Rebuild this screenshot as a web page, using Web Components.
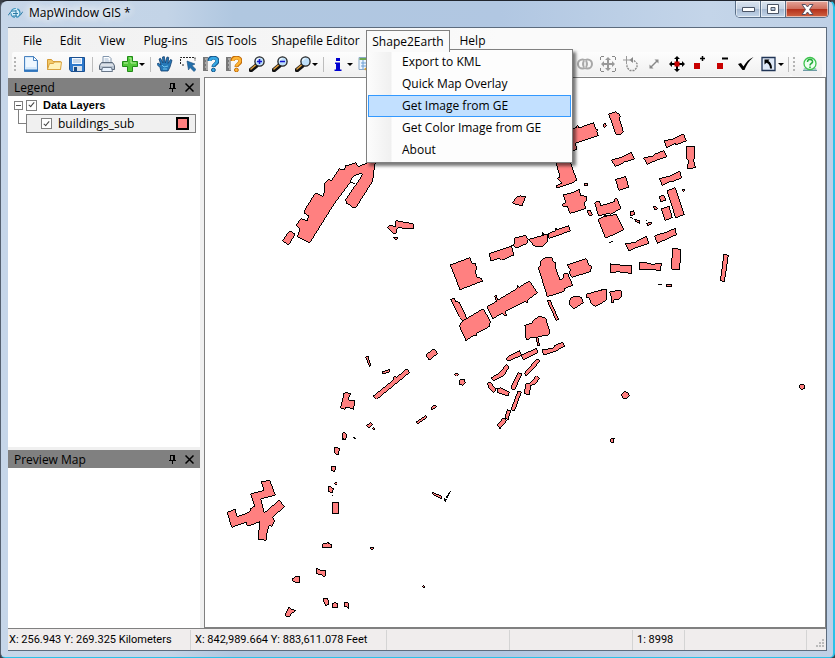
<!DOCTYPE html>
<html lang="en">
<head>
<meta charset="utf-8">
<title>MapWindow GIS</title>
<style>
html,body{height:100%;margin:0}
body{background:#3a3f48;font:12px/16px "Open Sans","Noto Sans",sans-serif;color:#000;overflow:hidden}
</style>
</head>
<body>
<mw-app></mw-app>
<script>
const define = (name, html, setup) => {
  const template = document.createElement('template');
  template.innerHTML = html;
  customElements.define(name, class extends HTMLElement {
    constructor() {
      super();
      this.attachShadow({ mode: 'open' }).append(template.content.cloneNode(true));
    }
    connectedCallback() { if (setup) setup(this, this.shadowRoot); }
  });
};

const lens = (mark) => `<path d="M2 14L7.500 9.500" stroke="#111" stroke-width="4.500" stroke-linecap="round"/><path d="M2 13L6.500 9.200" stroke="#d99a3c" stroke-width="1.600" stroke-linecap="round"/><circle cx="10.500" cy="5.500" r="4.600" fill="#bfe0fa" stroke="#222" stroke-width="1.300"/><path d="M7.500 5a3 3 0 0 1 3-2.500" stroke="#fff" fill="none"/>${mark}`;
const query = (c, d) => `<path d="M0 1h5v14H0z" fill="#777"/><path d="M2 3h3M3 5h2M2 7h3M3 9h2M2 11h3M3 13h2" stroke="#ddd"/><path d="M6.500 5C6.500 2 8.500 1.500 10.500 1.500S14.500 3 14.500 5c0 3-4 3-4 6" fill="none" stroke="${d}" stroke-width="4"/><path d="M6.800 5C7 2.500 8.500 2 10.500 2s3.600 1 3.600 3c0 3-3.800 3-3.800 5.500" fill="none" stroke="${c}" stroke-width="2.400"/><circle cx="10.400" cy="14" r="1.900" fill="${c}" stroke="${d}"/>`;
const ICONS = {
  new: '<path d="M1.500.5h9l4 4v11h-13z" fill="#d5e9fb" stroke="#4a83c0"/><path d="M3 2h7v3h3v6H3z" fill="#eef7ff"/><path d="M10.500.5v4h4z" fill="#fff" stroke="#4a83c0"/><path d="M1 14.500h14" stroke="#2f75bd" stroke-width="2"/>',
  open: '<path d="M1.500 13.500v-10h4l1.500 2h7.500v8z" fill="#f3c968" stroke="#d49a35"/><path d="M1.500 13.500l2-6h4l1-1.500h7l-1 7.500z" fill="#fff2b9" stroke="#d9a441"/>',
  save: '<path d="M.5 1.500h15v14H2l-1.500-2z" fill="#2d79cc" stroke="#1b4f8f"/><path d="M3 2h10v6H3z" fill="#f3f9ff"/><path d="M4 4h8M4 6h8" stroke="#9db9d6"/><path d="M4 10h9v5H4z" fill="#d7e1eb"/><path d="M5 11h3v4H5z" fill="#174a83"/>',
  print: '<path d="M4 7V.5h6l2 2V7" fill="#fff" stroke="#8296ad"/><path d="M5.500 3h4M5.500 5h5" stroke="#9fb6d0"/><path d="M2.500 6.500h11l2 3v4H.5v-4z" fill="#b9c4d1" stroke="#5b6878"/><path d="M2 9h12" stroke="#fff"/><path d="M3.500 11.500h9l1 4h-11z" fill="#e9f3ff" stroke="#697788"/>',
  add: '<path d="M5.500.5h5v5h5v5h-5v5h-5v-5h-5v-5h5z" fill="#53c83a" stroke="#208b17"/><path d="M7 2h2v5h5M2 7h4" stroke="#b6f19f" fill="none"/>',
  hand: '<path d="M4 15L3 11.500 0 8.500 1 7l3 2L2 3l1.500-.7L6 7 5.500 1 7.300.6 8.300 7 10 1l1.700.4L11 7.500 13.500 3.500l1.500.8L13 11l-2 4z" fill="#2679b8" stroke="#123f70" stroke-width=".8"/><path d="M5 9l2 2 4-1M6 13h4" stroke="#71c7ef" fill="none"/>',
  select: '<path d="M.5 8V1.500H15V5M2 9h2" fill="none" stroke="#222" stroke-dasharray="2 1"/><path d="M7 5l8 3-3 1.500 4 4-2 2-4-4L8.500 14z" fill="#226fab" stroke="#164b7c" stroke-width=".6"/>',
  ask: query('#36a8e5', '#155487'),
  ask2: query('#ffb535', '#c16b08'),
  zoomin: lens('<path d="M8 5.500h5M10.500 3v5" stroke="#1414d0" stroke-width="1.500"/>'),
  zoomout: lens('<path d="M8 5.500h5" stroke="#1414d0" stroke-width="1.500"/>'),
  zoom: lens(''),
  info: '<path d="M6 2h4v3H6zM5 6.500h5v7h1.500V15h-7v-1.500H6V8H5z" fill="#0000d0"/>',
  table: '<path d="M1 1.500h12v12H1z" fill="#eef6ff" stroke="#8ba9c8"/><path d="M1.500 2h12v2h-12z" fill="#6da84f"/><path d="M3 7h9M3 10h9M5 4v9" stroke="#6c9fd4"/><path d="M6 13l4-3 3 3-3 3z" fill="#dda02a"/>',
  union: '<g fill="none" stroke="#a8a8a8" stroke-width="2"><ellipse cx="5.500" cy="8" rx="4.500" ry="4.500"/><ellipse cx="10.500" cy="8" rx="4.500" ry="4.500"/></g><path d="M8 4v8" stroke="#ddd"/>',
  extent: '<path d="M.5 4V.5H4M12 .5h3.500V4M15.500 12v3.500H12M4 15.500H.5V12" stroke="#888" fill="none" stroke-dasharray="3 1"/><path d="M8 1l3 3H9v3h3V5l3 3-3 3V9H9v3h2l-3 3-3-3h2V9H4v2L1 8l3-3v2h3V4H5z" fill="#999"/>',
  rotate: '<path d="M3.500 0v8M0 4h7" stroke="#999"/><path d="M8 4.500h3l3 3v4l-3 3H7l-3-3V8" fill="none" stroke="#888" stroke-width="1.300" stroke-dasharray="2 1"/><path d="M10 1v6L6.500 4z" fill="#888"/>',
  resize: '<path d="M5 11l6-6" stroke="#888" stroke-width="1.500"/><path d="M12.500 3.500v4l-4-4zM3.500 12.500v-4l4 4z" fill="#888"/>',
  move: '<path d="M8 0l3 3H9v4h4V5l3 3-3 3V9H9v4h2l-3 3-3-3h2V9H3v2L0 8l3-3v2h4V3H5z" fill="#000"/><path d="M5.500 5.500h5v5h-5z" fill="#c80000"/>',
  plusnode: '<path d="M2 7h6v6H2z" fill="#c80000"/><path d="M8 2.500h5M10.500 0v5" stroke="#000" stroke-width="1.500"/>',
  minusnode: '<path d="M2 7h6v6H2z" fill="#c80000"/><path d="M7 2.500h6" stroke="#000" stroke-width="2"/>',
  check: '<path d="M0 8l3-1 2.500 3.500C8 6 11 3 15.500 1 11 5 8 9.500 6.500 14H4.500z" fill="#000"/>',
  arrowbox: '<path d="M1 1.500h13v13H1z" fill="#dfe9f7" stroke="#213556" stroke-width="1.300"/><path d="M3.500 3.500h5L7.300 5C9.500 6 11 8.500 11 12.500H9C9 9.500 7.500 7.500 5.500 6.800L3.500 8.500z" fill="#000"/>',
  help: '<path d="M2 12h12l1 3H1z" fill="#abc7ce"/><path d="M1 14.500h14" stroke="#6e9ba4"/><circle cx="8" cy="7.500" r="6" fill="#edfff0" stroke="#3dc44d" stroke-width="1.300"/><path d="M5.500 6c0-4 5.500-3 5 0-.3 1.500-2.500 1.500-2.500 3.500M8 10.500V12" stroke="#26ad3c" stroke-width="1.600" fill="none"/>'
};

define('mw-tool', `
<style>
:host{display:block;flex:none;width:23px}
:host([menu]){width:28px}
button{display:flex;align-items:center;gap:1px;width:100%;height:23px;padding:0 2px 0 3px;border:0;background:none}
svg{flex:none;width:16px;height:16px}
i{display:none;border:3px solid transparent;border-top-color:#000;border-bottom:0}
:host([menu]) i{display:block}
</style>
<button type="button"><svg viewBox="0 0 16 16" fill="none"></svg><i></i></button>`,
(host, root) => {
  root.querySelector('svg').innerHTML = ICONS[host.getAttribute('icon')];
  root.querySelector('button').setAttribute('aria-label', host.getAttribute('icon'));
});

define('mw-toolstrip', `
<style>
:host{display:flex;align-items:center;flex:none;height:24px;padding-left:2px;background:linear-gradient(#fdfdfd,#f0f0f0);border-radius:2px}
.grip{flex:none;width:2px;height:14px;margin-right:4px;background:repeating-linear-gradient(#b4b4b4 0 2px,transparent 2px 4px)}
:host([plain]) .grip{display:none}
::slotted(hr){width:1px;height:15px;margin:0 3px;border:0;background:#bdbdbd}
:host([plain]) ::slotted(hr){margin:0 2px}
</style>
<span class="grip"></span><slot></slot>`);

define('mw-menubar', `
<style>
:host{display:block;padding-left:6px;height:24px;background:linear-gradient(90deg,#f0f0f0,#fafafa 60%)}
nav{display:grid;grid-template-columns:37px 39px 44px 63px 68px 101px 84px 45px;height:100%}
nav>button{border:0;background:none;padding:2px 0 0;font:inherit;text-align:center;white-space:nowrap}
.open{position:relative;z-index:3}
.open>button{display:block;width:100%;height:22px;margin-top:2px;padding:0;border:1px solid #808080;border-bottom:0;background:#fafafa;font:inherit;white-space:nowrap;position:relative;z-index:2}
</style>
<nav>
<button>File</button><button>Edit</button><button>View</button><button>Plug-ins</button><button>GIS Tools</button><button>Shapefile Editor</button>
<div class="open"><button aria-expanded="true">Shape2Earth</button><slot></slot></div>
<button>Help</button>
</nav>`);

define('mw-dropdown', `
<style>
:host{position:absolute;left:0;top:21px;z-index:1;box-sizing:border-box;width:207px;padding:1px;border:1px solid #808080;background:linear-gradient(90deg,transparent 1px,#fcfcfc 1px,#f0f0f0 24px,#fdfdfd 25px);background-color:#fdfdfd;box-shadow:3px 3px 3px #0008}
</style>
<div role="menu"><slot></slot></div>`);

define('mw-menuitem', `
<style>
:host{display:block}
button{display:block;box-sizing:border-box;width:100%;height:22px;padding:0 0 0 33px;border:1px solid transparent;background:none;font:inherit;text-align:left;white-space:nowrap}
:host([active]) button{border-color:#3399ff;background:#c2e0ff}
</style>
<button role="menuitem"><slot></slot></button>`);

define('mw-panel', `
<style>
:host{display:flex;flex-direction:column;min-height:0;background:#fff}
header{display:flex;align-items:center;flex:none;height:18px;padding:0 2px 0 6px;background:#808080}
h2{flex:1;margin:0;padding-top:1px;font:inherit}
button{display:block;width:17px;height:16px;padding:0;border:0;background:none}
svg{display:block;margin:auto}
</style>
<header><h2></h2>
<button aria-label="Pin"><svg width="9" height="9" viewBox="0 0 9 9" shape-rendering="crispEdges"><path d="M2 0h5v5h1v1H5v3H4V6H1V5h1zM3 1v4h2V1z" fill="#000" fill-rule="evenodd"/></svg></button>
<button aria-label="Close"><svg width="9" height="9" viewBox="0 0 9 9"><path d="M.5.5l8 8M8.500.5l-8 8" stroke="#000" stroke-width="1.500"/></svg></button>
</header><slot></slot>`,
(host, root) => { root.querySelector('h2').textContent = host.getAttribute('heading'); });

define('mw-layers', `
<style>
:host{display:block;padding-right:4px}
label{display:flex;align-items:center}
input{appearance:none;flex:none;box-sizing:border-box;width:11px;height:11px;margin:0;border:1px solid #808080;background:#fff;display:grid;place-items:center}
input::after{content:"";width:2px;height:5px;margin-bottom:2px;border:solid #444;border-width:0 1px 1px 0;transform:rotate(40deg)}
.group{display:flex;align-items:center;padding-left:6px;height:18px;gap:3px}
.group button{box-sizing:border-box;width:9px;height:9px;padding:0;border:1px solid #808080;background:linear-gradient(#555,#555) center/5px 1px no-repeat #fff}
.group label{gap:6px;font:bold 11px/16px "Liberation Sans",Arial,sans-serif}
.row{display:flex}
.branch{width:8px;height:15px;margin:-5px 0 0 10px;border:solid #808080;border-width:0 0 1px 1px;box-sizing:border-box}
.layer{flex:1;display:flex;align-items:center;justify-content:space-between;box-sizing:border-box;height:19px;padding:0 6px 0 14px;border:1px solid #808080;background:#f0f0f0}
.layer label{gap:6px}
.swatch{width:9px;height:9px;border:2px solid #000;background:#ff8080}
</style>
<div class="group"><button aria-label="Collapse"></button><label><input type="checkbox" checked>Data Layers</label></div>
<div class="row"><span class="branch"></span><div class="layer"><label><input type="checkbox" checked>buildings_sub</label><span class="swatch"></span></div></div>`);

/* Building footprints: one group per map tile, as [x, y, polygons], three units to a pixel. */
const TILES = [
 [270,150,["83,260 119,279 190,165 240,98 248,80 262,73 275,71 277,75 262,98 226,150 231,161 240,164 244,170 257,174 268,156 305,98 309,85 311,65 316,36 292,38 265,51 257,38 236,45 228,46 224,58 208,57 185,91 175,89 163,102 163,118 165,123 158,140 137,128 103,182 103,190 117,198 111,212 92,206 79,226 90,236","242,96 256,102","38,272 59,242 75,253 55,286","353,232 361,225 376,231 378,212 393,215 430,221 429,237 385,233 380,238 378,250 368,249","371,262 381,262 382,268 377,271"]],
 [440,100,["348,185 390,185 410,240 398,248 375,256 351,264 350,256 366,250 352,235 360,232","370,285 399,277 417,268 423,287 438,289 441,300 432,308 438,325 412,334 390,340 383,321 370,321 368,312 378,308","217,308 232,290 242,287 245,291 257,290 246,318 219,310","433,250 443,250 443,257 433,257","222,415 255,406 265,417 260,431 229,444 220,436 225,425","267,418 324,402 322,425 310,438 295,441 282,437 272,426","324,402 346,392 345,385 349,384 350,389 386,377 391,393 327,415","305,403 308,397 312,402"]],
 [570,100,["-10,92 20,82 22,76 27,84 71,68 77,87 84,88 80,95 85,107 16,130 20,148 12,151 -8,140","99,73 105,70 109,78 103,82","116,42 138,35 147,43 151,50 148,57 160,95 155,98 153,102 137,103 128,75","282,122 307,118 340,101 349,122 318,135 316,130 290,144","349,139 374,139 374,170 371,180 376,203 353,206 355,180 350,178","125,180 155,172 184,157 193,177 163,186 160,190 135,199","221,174 248,168 251,164 281,152 290,170 258,181 232,193","268,236 300,228 329,214 335,233 307,245 302,243 277,256","137,238 167,230 176,262 146,271","291,273 316,263 343,344 317,353","267,291 281,285 288,300 273,305","274,327 297,319 307,353 285,361","335,271 341,268 345,271 340,274","250,321 257,319 262,326 255,329","52,333 60,331 67,345 57,346","44,251 52,251 52,257 44,257","74,308 88,303 93,317 133,305 135,296 142,296 152,325 122,343 115,340 90,347 85,345","84,358 102,350 138,343 161,389 107,415","102,345 112,349","180,336 191,332 194,344 182,347","194,358 210,363 209,370 196,363","230,370 244,366 246,371 234,377","227,360 231,361","167,341 169,342","181,351 188,355","118,428 128,423","166,432 195,427 229,409 236,430 206,440 177,452","254,407 288,397 316,385 319,404 262,430","307,445 332,448 329,510 305,507","121,492 148,494 154,497 185,496 185,520 153,517 148,515 121,518","210,487 240,490 245,493 274,490 271,512 240,507 208,508","462,463 475,466 463,545 451,542","265,554 275,555","289,553 305,554 305,561 291,561","93,569 109,567"]],
 [440,240,["31,75 90,53 96,70 107,72 110,88 105,95 112,112 124,115 128,123 60,149","147,41 215,18 221,45 185,61 178,54 153,63","213,15 222,16","295,82 303,75 303,62 318,51 335,53 341,66 348,68 347,85 360,120 370,115 372,102 383,101 398,136 374,145 372,154 322,170","382,75 439,56 446,75 457,80 450,95 396,112 387,98 391,90","140,200 170,184 164,168 168,166 174,180 232,145 233,135 237,142 268,123 292,159 265,178 262,188 255,185 195,215 200,228 193,228 188,219 158,236","32,178 43,174 46,183 58,187 82,238 70,243 59,232","58,258 68,243 130,206 151,245 147,260 110,280 108,288 102,285 78,302","322,183 331,180 335,192 356,238 349,242 330,200","388,184 394,173 410,168 424,172 430,188 402,206 390,195","440,162 499,147 500,178 485,190 465,199 452,188 448,174 441,174","509,155 540,151 545,155 544,172 531,180 521,179 521,188 514,186 514,172","255,256 275,250 282,240 300,228 317,235 322,252 330,274 325,285 293,290 299,318 293,318 288,291 270,294 262,300 258,295","307,330 340,324 345,316 368,307 374,319 345,334 318,343 310,342","244,345 290,325 293,338 250,360","199,356 208,347 239,332 244,346 203,364","154,414 179,398 199,374 208,380 192,406 160,422","253,400 290,357 301,362 271,396 259,408","216,435 235,398 246,402 223,451 213,444","142,430 151,427 169,450 160,457 146,442","171,445 182,444 208,457 204,468 172,457","257,432 269,430 290,407 298,415 286,433 273,436 267,464 253,461","234,453 244,456 223,514 213,509","202,509 212,512 204,539 195,534","171,555 190,534 201,541 180,566","44,403 49,399 55,403 49,409","59,419 72,418 76,428 70,436 60,434","545,465 552,455 562,457 569,467 560,476 548,474"]],
 [340,340,["77,51 87,49 86,58 93,75 88,79","126,96 149,88 150,95 128,102","100,168 160,120 163,108 170,112 200,87 209,97 110,178","257,44 282,27 293,40 268,60","273,202 285,195 291,200 276,209","228,246 258,227 261,232 233,251","12,160 18,157 32,161 25,175 28,181 44,182 41,208 30,204 18,202 14,208 2,204","80,256 92,248 98,254 86,265","95,266 101,262 105,269","9,279 14,277 21,284 17,299 6,297","40,293 44,291 46,297"]],
 [220,430,["124,156 149,151 166,195 122,207 133,249 177,211 194,229 157,263 165,272 155,289 148,286 142,302 138,331 115,327 119,275 83,289 78,277 35,292 22,247 45,238 52,260 88,247 93,235 104,229 92,192 132,181","369,9 374,7 381,14 377,29 368,25","401,20 407,25 403,26","343,52 359,55 354,75 344,69","334,108 348,110 343,125 334,120","344,160 348,157 352,161 346,165","325,171 333,171 341,177 336,188 325,185","335,194 338,196","337,219 356,219 356,251 337,251","309,341 319,341 323,336 327,341 336,344 336,354 309,354","451,353 461,352 457,361","290,415 300,420 318,421 314,442 306,434 289,431","219,445 230,439 240,440 240,459 226,457 219,453","607,469 612,467 613,473","310,505 323,505 326,523 317,527 311,515","337,522 345,518 354,522 353,533 337,533","373,519 384,519 386,535 381,531 373,528","206,532 216,538 227,542 215,550 208,560 195,557","637,187 665,199 663,206 639,193","691,184 680,205 679,202","672,206 680,208 676,215"]],
 [600,370,["600,45 607,42 614,48 613,56 605,59 600,54","32,207 43,204 39,220 31,214"]]
];

define('mw-map', `
<style>
:host{display:block;min-width:0;overflow:hidden;border:1px solid #808080;background:#fff}
svg{display:block}
</style>
<svg width="621" height="549" viewBox="205 78 621 549" role="img" aria-label="buildings_sub"></svg>`,
(host, root) => {
  root.querySelector('svg').innerHTML = TILES.map(([x, y, shapes]) =>
    `<g transform="translate(${x} ${y}) scale(.33333)" fill="#ff8080" stroke="#000" stroke-width="3" shape-rendering="crispEdges">${shapes.map(p => `<polygon points="${p}"/>`).join('')}</g>`).join('');
});

define('mw-statusbar', `
<style>
:host{display:grid;grid-template-columns:183px 196px 123px 123px 52px 1fr 19px;height:20px;padding:1px 0 0;background:#f0eded;font:11px/20px Roboto,"Open Sans",sans-serif}
span{padding-left:4px;border-right:1px solid #d4d4d4;white-space:nowrap;margin-bottom:1px}
span:first-of-type{padding-left:1px}
span:last-child{border:0;padding:0;display:flex;align-items:flex-end;justify-content:flex-end}
</style>
<span>X: 256.943 Y: 269.325 Kilometers</span><span>X: 842,989.664 Y: 883,611.078 Feet</span><span></span><span></span><span>1: 8998</span><span></span>
<span><svg width="12" height="12"><path d="M8 1h2v2H8zM5 4h2v2H5zM8 4h2v2H8zM2 7h2v2H2zM5 7h2v2H5zM8 7h2v2H8z" fill="#bbb"/></svg></span>`);

define('mw-titlebar', `
<style>
:host{display:flex;align-items:flex-start;height:26px;margin-right:-2px}
svg{display:block}
.logo{flex:none;margin:6px 6px 0 0}
h1{flex:1;margin:4px 0 0;font:inherit;text-shadow:0 0 8px #fff,0 0 8px #fff,0 0 12px #fff}
div{display:flex;height:16px;border:1px solid #5a6f88;border-top:0;border-radius:0 0 5px 5px;overflow:hidden}
button{display:grid;place-items:center;width:25px;padding:0;border:0;border-right:1px solid #5a6f88;background:linear-gradient(#dbe5f0,#c3d1e2 48%,#a5b8d0 50%,#c4d6ea);box-shadow:inset 0 0 0 1px #ffffff90}
button:last-child{width:42px;border:0;background:linear-gradient(#e5a59a,#d0705f 48%,#b32e19 50%,#cf6342)}
</style>
<svg class="logo" width="15" height="13" viewBox="0 0 15 13"><circle cx="7.500" cy="6" r="4.500" fill="#d5eefa" stroke="#3b93bd" stroke-width="1.200" stroke-dasharray="6 1.500"/><path d="M0 8.500l3-4M15 4.500l-3 4M4 4h4M5 6.500h5M8 3v7M5 9h4" stroke="#2a7ba6"/></svg>
<h1>MapWindow GIS *</h1>
<div>
<button aria-label="Minimize"><svg width="13" height="6"><path d="M.5 1.500h12v4H.5z" fill="#fff" stroke="#4b5566"/></svg></button>
<button aria-label="Maximize"><svg width="12" height="10"><path d="M.5.5h11v9H.5zM4 3.500h4v3H4z" fill="#fff" fill-rule="evenodd" stroke="#4b5566"/></svg></button>
<button aria-label="Close"><svg width="13" height="11" viewBox="0 0 13 11"><path d="M1 .5h3.500l2 2.500 2-2.500H12L8.500 5.500 12 10.500H8.500l-2-2.500-2 2.500H1l3.500-5z" fill="#fff" stroke="#575063"/></svg></button>
</div>`);

define('mw-app', `
<style>
:host{display:flex;flex-direction:column;box-sizing:border-box;height:100vh;padding:0 6px 6px 7px;border:solid;border-width:1px 2px 1px 1px;border-color:#20252e #2bc1e8 #2bc1e8 #55606f;border-radius:7px 7px 5px 5px;background:linear-gradient(90deg,#c6d6e9,#c3d4e7 20%,#b0c7e0 28%,#b1c7e2 60%,#c4d5e9 85%,#bed0e6)}
main{flex:1;display:flex;flex-direction:column;min-height:0;border:solid #5c6b7d;border-width:1px 1px 1px 0;background:#f0f0f0}
.bars{display:flex;flex:none;padding:0 4px;height:25px;align-items:flex-start;background:linear-gradient(90deg,#f0f0f0,#fafafa)}
.bars mw-toolstrip:nth-child(2){margin-left:auto}
.work{flex:1;display:grid;grid-template-columns:192px minmax(0,1fr);column-gap:4px;min-height:0}
.side{display:grid;grid-template-rows:minmax(0,369fr) minmax(0,178fr);row-gap:3px;padding-top:1px;min-height:0}
mw-statusbar{border-top:1px solid #808080}
</style>
<mw-titlebar></mw-titlebar>
<main>
<mw-menubar><mw-dropdown><mw-menuitem>Export to KML</mw-menuitem><mw-menuitem>Quick Map Overlay</mw-menuitem><mw-menuitem active>Get Image from GE</mw-menuitem><mw-menuitem>Get Color Image from GE</mw-menuitem><mw-menuitem>About</mw-menuitem></mw-dropdown></mw-menubar>
<div class="bars">
<mw-toolstrip><mw-tool icon="new"></mw-tool><mw-tool icon="open"></mw-tool><mw-tool icon="save"></mw-tool><hr><mw-tool icon="print"></mw-tool><mw-tool icon="add" menu></mw-tool><hr><mw-tool icon="hand"></mw-tool><mw-tool icon="select"></mw-tool><mw-tool icon="ask"></mw-tool><mw-tool icon="ask2"></mw-tool><mw-tool icon="zoomin"></mw-tool><mw-tool icon="zoomout"></mw-tool><mw-tool icon="zoom" menu></mw-tool><hr><mw-tool icon="info" menu></mw-tool><mw-tool icon="table"></mw-tool></mw-toolstrip>
<mw-toolstrip plain><mw-tool icon="union"></mw-tool><mw-tool icon="extent"></mw-tool><mw-tool icon="rotate"></mw-tool><mw-tool icon="resize"></mw-tool><mw-tool icon="move"></mw-tool><mw-tool icon="plusnode"></mw-tool><mw-tool icon="minusnode"></mw-tool><mw-tool icon="check"></mw-tool><mw-tool icon="arrowbox" menu></mw-tool><hr></mw-toolstrip>
<mw-toolstrip><mw-tool icon="help"></mw-tool></mw-toolstrip>
</div>
<div class="work">
<div class="side"><mw-panel heading="Legend"><mw-layers></mw-layers></mw-panel><mw-panel heading="Preview Map"></mw-panel></div>
<mw-map></mw-map>
</div>
<mw-statusbar></mw-statusbar>
</main>`);
</script>
</body>
</html>
